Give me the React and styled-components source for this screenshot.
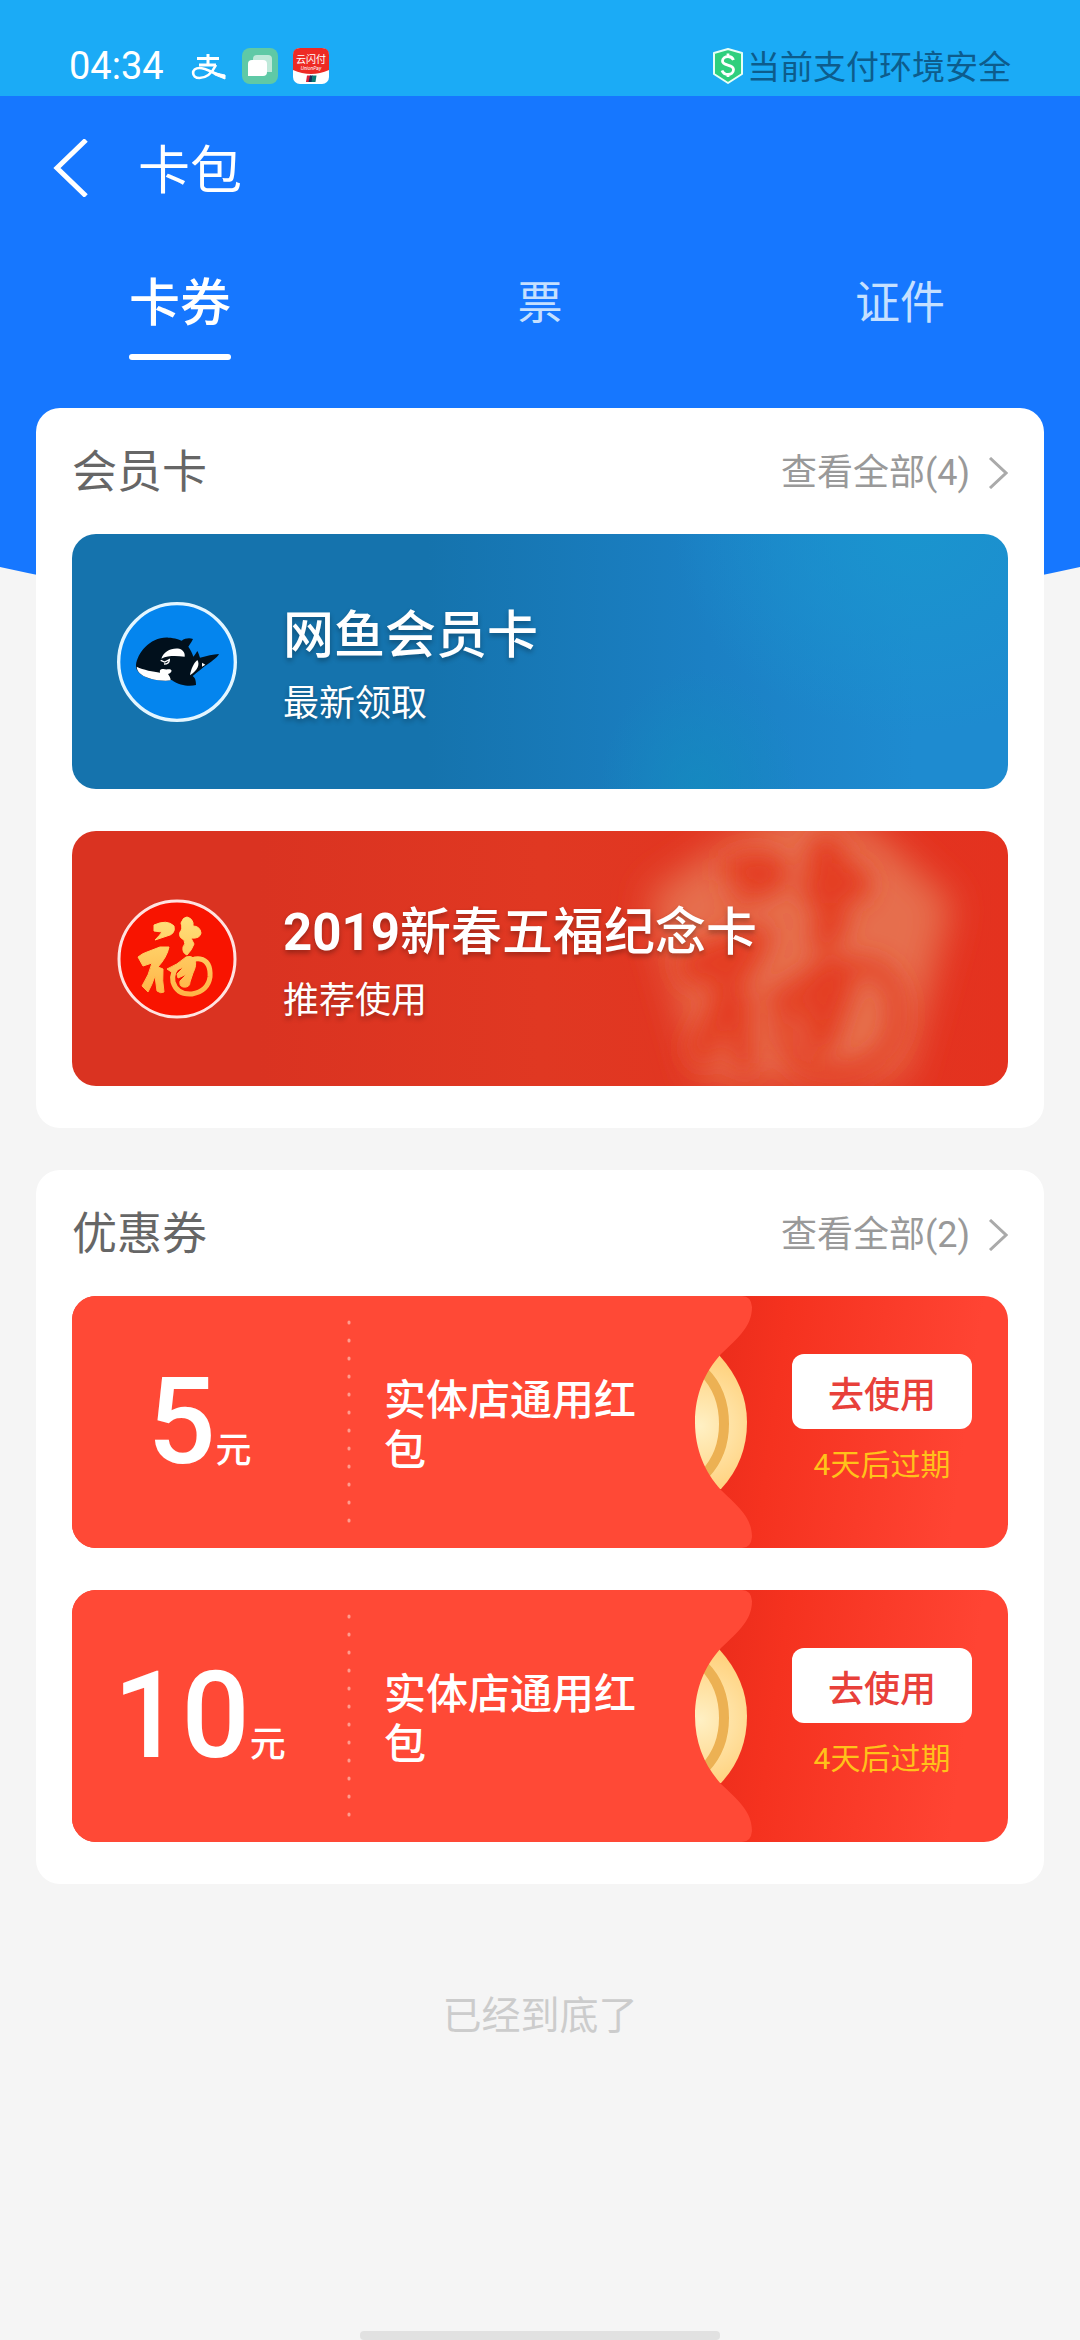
import React, { useState } from "react";
import styled, { createGlobalStyle } from "styled-components";

const GlobalStyle = createGlobalStyle`
  * {
    box-sizing: border-box;
  }
  body {
    margin: 0;
    background-color: #f5f5f5;
    font-family: Roboto, "Noto Sans CJK SC", sans-serif;
  }
  button {
    padding: 0;
    border: 0;
    background: none;
    font-family: inherit;
    cursor: pointer;
  }
  a {
    text-decoration: none;
  }
  h1, h2, h3, p {
    margin: 0;
    font-weight: 400;
  }
`;

const StyledPage = styled.div`
  display: flex;
  flex-direction: column;
  min-height: 100vh;
`;

/* status bar */

const StyledStatusBar = styled.div`
  display: flex;
  justify-content: space-between;
  align-items: flex-end;
  height: 96px;
  padding: 0 69px 12px;
  background-color: #1babf6;
`;

const StyledStatusGroup = styled.div`
  display: flex;
  align-items: center;
  gap: ${props => props.gap}px;
  height: 36px;
`;

const StyledTime = styled.span`
  margin-right: 12px;
  color: #ffffff;
  font-size: 38px;
  line-height: 36px;
`;

const StyledSafeText = styled.span`
  padding-top: 4px;
  color: #0d5c8c;
  font-size: 33px;
  line-height: 36px;
`;

/* header */

const StyledHeader = styled.header`
  padding-bottom: 218px;
  background-color: #1677ff;
  clip-path: circle(2500px at 50% calc(100% - 2500px));
`;

const StyledNav = styled.div`
  display: flex;
  align-items: center;
  gap: 50px;
  height: 148px;
  padding: 0 52px 4px;
`;

const StyledBack = styled.button`
  display: flex;
`;

const StyledPageTitle = styled.h1`
  padding-top: 8px;
  color: #ffffff;
  font-size: 52px;
  line-height: 72px;
`;

const StyledTabs = styled.nav`
  display: grid;
  grid-template-columns: repeat(3, 1fr);
`;

const StyledTab = styled.button`
  display: flex;
  flex-direction: column;
  align-items: center;
  gap: 20px;
  padding: 30px 0 48px;
  color: ${props => (props.$active ? "#ffffff" : "#c5e0ff")};
  font-size: ${props => (props.$active ? 51 : 45)}px;
  font-weight: ${props => (props.$active ? 500 : 400)};
  line-height: 60px;

  &::after {
    content: "";
    width: 102px;
    height: 6px;
    border-radius: 3px;
    background-color: ${props => (props.$active ? "#ffffff" : "transparent")};
  }
`;

/* sections */

const StyledMain = styled.main`
  display: flex;
  flex-direction: column;
  gap: 42px;
  margin-top: -218px;
  padding: 0 36px;
  z-index: 1;
`;

const StyledSection = styled.section`
  padding: 0 36px 42px;
  border-radius: 24px;
  background-color: #ffffff;
`;

const StyledSectionHead = styled.div`
  display: flex;
  justify-content: space-between;
  align-items: center;
  height: 126px;
  padding-top: 3px;
`;

const StyledSectionTitle = styled.h2`
  color: #666666;
  font-size: 45px;
  line-height: 60px;
`;

const StyledMore = styled.a`
  display: flex;
  align-items: center;
  gap: 18px;
  color: #999999;
  font-size: 36px;
  line-height: 48px;
`;

const StyledList = styled.div`
  display: flex;
  flex-direction: column;
  gap: 42px;
`;

/* member cards */

const themes = {
  ocean: `
    radial-gradient(ellipse 240px 200px at 90% 0%, #1a94ce, rgba(26, 148, 206, 0)),
    radial-gradient(ellipse 100px 120px at 67% 100%, rgba(20, 139, 191, 0.8), rgba(20, 139, 191, 0)),
    linear-gradient(to right, #1573ad 38%, #1b80c4 68%, #1e8bd0 90%)
  `,
  lucky: "linear-gradient(to right, #da3321 20%, #e03822 50%, #e4321f)"
};

const StyledMember = styled.article`
  display: flex;
  align-items: center;
  gap: 46px;
  position: relative;
  height: 255px;
  padding: 0 45px;
  border-radius: 24px;
  background: ${props => themes[props.$theme]};
  overflow: hidden;
`;

const StyledMemberText = styled.div`
  display: flex;
  flex-direction: column;
  gap: 8px;
  padding-top: 5px;
  color: #ffffff;
  text-shadow: 0 3px 5px rgba(0, 0, 0, 0.3);
  z-index: 1;
`;

const StyledMemberName = styled.h3`
  font-size: 51px;
  font-weight: 500;
  line-height: 72px;

  b {
    font-weight: 700;
  }
`;

const StyledMemberNote = styled.p`
  font-size: 36px;
  line-height: 48px;
`;

const StyledArt = styled.svg`
  position: absolute;
  inset: 0;
  width: 100%;
  height: 100%;
`;

/* coupons */

const StyledCoupon = styled.article`
  display: flex;
  height: 252px;
  border-radius: 24px;
  background: linear-gradient(98deg, #ea2c1b 66%, #f5321f 74%, #ff4433 94%);
  overflow: hidden;
`;

const StyledCouponInfo = styled.div`
  display: flex;
  flex: 1;
  align-items: center;
  padding-right: 20px;
  background-color: #ff4936;
`;

const StyledAmount = styled.div`
  display: flex;
  justify-content: center;
  align-items: baseline;
  width: 275px;
  padding-right: 20px;
  color: #ffffff;
  font-size: 36px;
  font-weight: 500;
`;

const StyledAmountValue = styled.span`
  font-size: 120px;
  line-height: 120px;
`;

const StyledCouponName = styled.h3`
  flex: 1;
  padding: 8px 0 0 33px;
  color: #ffffff;
  font-size: 42px;
  font-weight: 500;
  line-height: 50px;
`;

const StyledCouponAction = styled.div`
  display: flex;
  flex-direction: column;
  justify-content: center;
  align-items: center;
  gap: 16px;
  width: 252px;
  padding-bottom: 5px;
`;

const StyledUse = styled.button`
  width: 180px;
  height: 75px;
  border-radius: 12px;
  background-color: #ffffff;
  color: #e8403a;
  font-size: 36px;
  font-weight: 500;
`;

const StyledExpiry = styled.p`
  color: #ffc21a;
  font-size: 30px;
  line-height: 40px;
`;

/* bottom */

const StyledEnd = styled.p`
  margin-top: 102px;
  color: #cccccc;
  font-size: 39px;
  line-height: 60px;
  text-align: center;
`;

const StyledHomeBar = styled.div`
  align-self: center;
  width: 360px;
  height: 9px;
  margin-top: auto;
  border-radius: 4px;
  background-color: #e1e1e1;
`;

const AlipayIcon = () => (
  <svg width="36" height="36" viewBox="0 0 36 36" fill="none" stroke="#ffffff">
    <path d="M6 10.500H28M17 6V17M8 17H25" strokeWidth="3" />
    <path d="M25 17C21 25 15 30 8.500 30C0 30 0 20 8.500 20C15 20 24 26 34 29" strokeWidth="2.600" />
    <path d="M20 24L34 27V31L24 27Z" fill="#ffffff" strokeWidth="1" />
  </svg>
);

const ChatIcon = () => (
  <svg width="36" height="36" viewBox="0 0 36 36">
    <rect width="36" height="36" rx="8" fill="#5fc9a6" />
    <path d="M15 7H26Q30 7 30 11V24H15Q11 24 11 20V11Q11 7 15 7Z" fill="#bfe9da" />
    <path d="M10 12H21Q25 12 25 16V24Q25 28 21 28H6V16Q6 12 10 12Z" fill="#ffffff" />
  </svg>
);

const UnionPayIcon = () => (
  <svg width="36" height="36" viewBox="0 0 36 36">
    <rect width="36" height="36" rx="7" fill="#ffffff" />
    <path d="M0 22V7Q0 0 7 0H29Q36 0 36 7V22Q18 30 0 22Z" fill="#ee2a24" />
    <text x="18" y="15" fill="#ffffff" fontSize="10" textAnchor="middle">云闪付</text>
    <text x="18" y="22" fill="#ffffff" fontSize="5" fontStyle="italic" textAnchor="middle">UnionPay</text>
    <path d="M14 27.500H18L17 34H13Z" fill="#d8213c" />
    <path d="M17 27.500H20L19 34H15.500Z" fill="#15305c" />
    <path d="M19.500 27.500H23.500L22.500 34H18.500Z" fill="#0b7a75" />
  </svg>
);

const ShieldIcon = () => (
  <svg width="30" height="36" viewBox="0 0 30 36">
    <path d="M15 1L29 5V26L15 35L1 26V5Z" fill="#2fcf7d" stroke="#e6fff6" strokeWidth="2" strokeLinejoin="round" />
    <path
      d="M20.500 12C19.500 9.500 17.500 8.500 15 8.500C12 8.500 9.500 10.500 9.500 13C9.500 18.500 20.500 15.500 20.500 21.500C20.500 24.500 18 26.500 15 26.500C12 26.500 10 25 9 22.500M15 5.500V9M15 26V29"
      fill="none"
      stroke="#ffffff"
      strokeWidth="2.800"
    />
  </svg>
);

const BackIcon = () => (
  <svg width="36" height="58" viewBox="0 0 36 58">
    <path d="M34 1L5 29L34 57" fill="none" stroke="#ffffff" strokeWidth="5" />
  </svg>
);

const ChevronIcon = () => (
  <svg width="20" height="32" viewBox="0 0 20 32">
    <path d="M2 1L18 16L2 31" fill="none" stroke="#aaaaaa" strokeWidth="3" />
  </svg>
);

const WhaleLogo = () => (
  <svg width="120" height="120" viewBox="51 36 360 360">
    <circle cx="231" cy="216" r="175" fill="#0485ee" stroke="#e4f6ff" strokeWidth="10" />
    <path
      d="M108 225C112 190 150 140 205 143C225 143 240 150 245 152C255 145 268 143 279 147C274 158 268 165 265 170C272 180 277 190 280 200C285 195 289 188 292 183C296 190 298 198 300 203C320 198 340 193 357 192C352 203 330 218 315 228C300 240 285 252 278 258C285 263 288 270 288 285C270 290 240 288 215 270C190 275 150 270 125 255C112 245 106 235 108 225Z"
      fill="#01101c"
    />
    <g fill="#ffffff">
      <path d="M110 230C130 240 160 245 180 248C178 240 182 236 190 237C200 240 208 236 214 240C216 247 210 250 204 252C208 258 212 263 212 271C180 275 140 265 125 254C115 247 110 238 110 230Z" />
      <path d="M184 206C190 185 215 172 238 176C250 180 256 190 254 200C230 198 205 196 184 206Z" />
      <path d="M292 210C300 222 294 240 270 256C272 240 280 220 292 210Z" />
      <path d="M306 218L316 224L306 230Z" />
    </g>
    <path d="M182 211L194 216L208 209Q208 222 192 222" fill="none" stroke="#ffffff" strokeWidth="4" />
  </svg>
);

const FuStrokes = ({ color }) => (
  <g fill={color} stroke={color} strokeWidth="1" strokeLinejoin="round">
    <path d="M37 26Q50 20 57 27Q59 35 50 37L38 41Q43 36 45 33L37 32Z" />
    <path d="M21 58Q26 54 30 53L43 48L52 48Q50 58 41 68L46 70Q45 82 47 93Q44 95 40 92L38 77Q35 86 31 93L25 87Q32 76 35 64L26 67Z" />
    <path d="M70 18Q77 20 76 27Q83 27 84 34Q83 40 74 39L77 45Q75 51 70 56Q65 54 66 48Q69 45 67 41Q61 38 63 33Q66 30 64 24Q66 18 70 18Z" />
    <path d="M69 58Q75 56 78 61Q80 66 76 74L73 83Q73 89 66 88Q62 87 63 82L70 75L61 79L60 75L67 68Q60 70 56 74L50 70Q60 66 69 58Z" />
    <path d="M63 66Q54 72 56 83Q60 96 75 95Q91 92 93 78Q94 62 83 60Q76 59 69 65" fill="none" strokeWidth="5" />
  </g>
);

const FuLogo = () => (
  <svg width="120" height="120" viewBox="0 0 120 120">
    <defs>
      <linearGradient id="fuGold" gradientUnits="userSpaceOnUse" x1="0" y1="18" x2="0" y2="97">
        <stop offset="0" stopColor="#ffe07a" />
        <stop offset="1" stopColor="#ffb446" />
      </linearGradient>
    </defs>
    <circle cx="60" cy="60" r="58" fill="#f81400" stroke="#ffe3e0" strokeWidth="3" />
    <FuStrokes color="url(#fuGold)" />
  </svg>
);

const FuArt = () => (
  <StyledArt viewBox="0 0 936 255" preserveAspectRatio="xMaxYMid slice">
    <defs>
      <filter id="softEdge" x="-30%" y="-30%" width="160%" height="160%">
        <feGaussianBlur stdDeviation="18" />
      </filter>
      <filter id="softMark" x="-30%" y="-30%" width="160%" height="160%">
        <feGaussianBlur stdDeviation="4" />
      </filter>
    </defs>
    <path d="M577 64L660 8L736 -32L806 4L880 72L832 246L630 250Z" fill="#e66e4e" filter="url(#softEdge)" />
    <g transform="translate(537 -51) scale(3.100)" filter="url(#softMark)">
      <FuStrokes color="#e43d24" />
    </g>
  </StyledArt>
);

const CoinEdge = () => (
  <svg width="66" height="252" viewBox="0 0 66 252">
    <defs>
      <radialGradient id="coin" gradientUnits="userSpaceOnUse" cx="10" cy="130" r="72">
        <stop offset="0" stopColor="#fff0c4" />
        <stop offset="1" stopColor="#ffd07a" />
      </radialGradient>
      <clipPath id="lens">
        <path d="M29 59Q57 90 57 126Q57 165 31 193L0 193V59Z" />
      </clipPath>
    </defs>
    <g clipPath="url(#lens)">
      <rect width="66" height="252" fill="url(#coin)" />
      <path d="M14 76Q34 96 34 128Q34 158 15 178" fill="none" stroke="#ecb153" strokeWidth="10" />
    </g>
    <path
      d="M0 0H52Q61 0 62 11C62 30 49 41 31 58C15 76 5 98 5 126C5 154 15 176 31 194C49 211 62 222 62 241Q61 252 52 252H0Z"
      fill="#ff4936"
    />
  </svg>
);

const DotLine = () => (
  <svg width="4" height="204" viewBox="0 0 4 204">
    <path d="M2 2V202" stroke="#ff9c8e" strokeWidth="3" strokeLinecap="round" strokeDasharray="1 17" />
  </svg>
);

const Section = ({ title, count, children }) => (
  <StyledSection>
    <StyledSectionHead>
      <StyledSectionTitle>{title}</StyledSectionTitle>
      <StyledMore href="#all">
        查看全部({count})
        <ChevronIcon />
      </StyledMore>
    </StyledSectionHead>
    <StyledList>{children}</StyledList>
  </StyledSection>
);

const Coupon = ({ amount, name, expiry }) => (
  <StyledCoupon>
    <StyledCouponInfo>
      <StyledAmount>
        <StyledAmountValue>{amount}</StyledAmountValue>元
      </StyledAmount>
      <DotLine />
      <StyledCouponName>{name}</StyledCouponName>
    </StyledCouponInfo>
    <CoinEdge />
    <StyledCouponAction>
      <StyledUse type="button">去使用</StyledUse>
      <StyledExpiry>{expiry}</StyledExpiry>
    </StyledCouponAction>
  </StyledCoupon>
);

const tabs = ["卡券", "票", "证件"];

const coupons = [
  { amount: 5, name: "实体店通用红包", expiry: "4天后过期" },
  { amount: 10, name: "实体店通用红包", expiry: "4天后过期" }
];

const App = () => {
  const [active, setActive] = useState(0);

  return (
    <StyledPage>
      <GlobalStyle />
      <StyledStatusBar>
        <StyledStatusGroup gap={15}>
          <StyledTime>04:34</StyledTime>
          <AlipayIcon />
          <ChatIcon />
          <UnionPayIcon />
        </StyledStatusGroup>
        <StyledStatusGroup gap={4}>
          <ShieldIcon />
          <StyledSafeText>当前支付环境安全</StyledSafeText>
        </StyledStatusGroup>
      </StyledStatusBar>
      <StyledHeader>
        <StyledNav>
          <StyledBack type="button" aria-label="返回">
            <BackIcon />
          </StyledBack>
          <StyledPageTitle>卡包</StyledPageTitle>
        </StyledNav>
        <StyledTabs>
          {tabs.map((tab, i) => (
            <StyledTab key={tab} type="button" $active={i === active} onClick={() => setActive(i)}>
              {tab}
            </StyledTab>
          ))}
        </StyledTabs>
      </StyledHeader>
      <StyledMain>
        <Section title="会员卡" count={4}>
          <StyledMember $theme="ocean">
            <WhaleLogo />
            <StyledMemberText>
              <StyledMemberName>网鱼会员卡</StyledMemberName>
              <StyledMemberNote>最新领取</StyledMemberNote>
            </StyledMemberText>
          </StyledMember>
          <StyledMember $theme="lucky">
            <FuArt />
            <FuLogo />
            <StyledMemberText>
              <StyledMemberName><b>2019</b>新春五福纪念卡</StyledMemberName>
              <StyledMemberNote>推荐使用</StyledMemberNote>
            </StyledMemberText>
          </StyledMember>
        </Section>
        <Section title="优惠券" count={2}>
          {coupons.map(coupon => (
            <Coupon key={coupon.amount} {...coupon} />
          ))}
        </Section>
      </StyledMain>
      <StyledEnd>已经到底了</StyledEnd>
      <StyledHomeBar />
    </StyledPage>
  );
};

export default App;
